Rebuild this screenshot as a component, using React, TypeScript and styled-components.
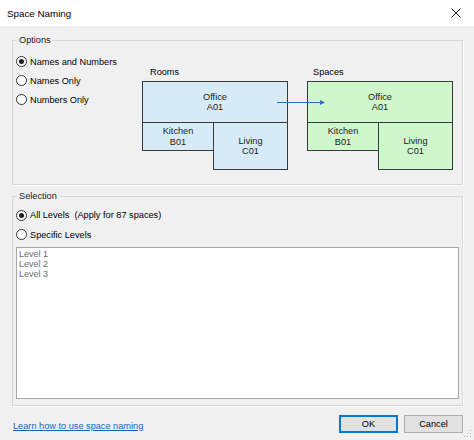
import styled, { createGlobalStyle } from "styled-components";

const GlobalStyle = createGlobalStyle`
  html, body {
    margin: 0;
    padding: 0;
    background: #f0f0f0;
  }
  body {
    font-family: "Liberation Sans", Arial, sans-serif;
    font-size: 9.2px;
    color: #000;
  }
`;

const Window = styled.div`
  position: relative;
  width: 474px;
  height: 440px;
  display: flex;
  flex-direction: column;
  background: #f0f0f0;
  overflow: hidden;
`;

const TitleBar = styled.div`
  height: 26px;
  flex-shrink: 0;
  background: #fff;
  display: flex;
  align-items: center;
  justify-content: space-between;
  padding: 0 13px 0 7px;
`;

const Title = styled.span`
  font-size: 9.8px;
  color: #000;
`;

const Content = styled.div`
  display: flex;
  flex-direction: column;
  padding: 9px 11px 0 12px;
`;

const Group = styled.fieldset<{ $gap?: number }>`
  margin: ${(p) => p.$gap ?? 0}px 0 0 0;
  padding: 0;
  min-width: 0;
  border: 1px solid #d9d9d9;
  box-shadow: 1px 1px 0 #fbfbfb;
`;

const Caption = styled.legend`
  margin-left: 4px;
  padding: 0 2px;
  line-height: 11px;
  font-size: 9.2px;
  color: #1a1a1a;
`;

const OptionsBody = styled.div`
  height: 138px;
  display: flex;
`;

const RadioList = styled.div`
  width: 129px;
  padding-top: 6px;
  display: flex;
  flex-direction: column;
`;

const RadioRow = styled.label<{ $h?: number }>`
  height: ${(p) => p.$h ?? 19}px;
  display: flex;
  align-items: center;
  gap: 3px;
  padding-left: 3px;
  white-space: nowrap;
`;

const RadioCircle = styled.span<{ $checked?: boolean }>`
  box-sizing: border-box;
  width: 11px;
  height: 11px;
  border-radius: 50%;
  border: 1px solid #333;
  background: #fff;
  display: flex;
  align-items: center;
  justify-content: center;
  &::after {
    content: "";
    width: 5px;
    height: 5px;
    border-radius: 50%;
    background: ${(p) => (p.$checked ? "#1e1e1e" : "transparent")};
  }
`;

const DiagramRow = styled.div`
  position: relative;
  display: flex;
  gap: 19px;
  padding-top: 21px;
  align-items: flex-start;
`;

const Diagram = styled.div`
  width: 146px;
  display: flex;
  flex-direction: column;
`;

const DiagramLabel = styled.div<{ $indent: number }>`
  line-height: 11px;
  height: 14px;
  padding-left: ${(p) => p.$indent}px;
`;

const RoomRow = styled.div`
  display: flex;
  align-items: flex-start;
  margin-top: -1px;
`;

const Room = styled.div<{ $w: number; $h: number; $fill: string; $overlap?: boolean }>`
  box-sizing: border-box;
  width: ${(p) => p.$w}px;
  height: ${(p) => p.$h}px;
  margin-left: ${(p) => (p.$overlap ? -1 : 0)}px;
  border: 1px solid #3a3a3a;
  background: ${(p) => p.$fill};
  display: flex;
  flex-direction: column;
  align-items: center;
  justify-content: center;
  line-height: 10.5px;
  color: #1c1c1c;
  text-align: center;
`;

const Arrow = styled.svg`
  position: absolute;
  left: 135px;
  top: 53px;
`;

const SelectionBody = styled.div`
  display: flex;
  flex-direction: column;
  padding: 3px 3px 6px 0;
`;

const LevelList = styled.div`
  box-sizing: border-box;
  height: 152px;
  margin: 3px 0 0 3px;
  border: 1px solid #a8a8a8;
  background: #fff;
  padding: 1px 2px;
  display: flex;
  flex-direction: column;
`;

const LevelItem = styled.div`
  line-height: 10px;
  font-size: 9px;
  color: #6d6d6d;
`;

const Footer = styled.div`
  display: flex;
  align-items: flex-start;
  padding: 9px 11px 0 13px;
`;

const HelpLink = styled.a`
  margin-top: 6px;
  color: #1a62c0;
  text-decoration: underline;
  cursor: pointer;
`;

const ButtonGroup = styled.div`
  margin-left: auto;
  display: flex;
  gap: 6px;
`;

const Button = styled.button<{ $default?: boolean }>`
  box-sizing: border-box;
  width: 59px;
  height: 18px;
  padding: 0;
  font-family: inherit;
  font-size: 9.2px;
  color: #000;
  background: #e1e1e1;
  border: 1px solid ${(p) => (p.$default ? "#0078d7" : "#adadad")};
  box-shadow: ${(p) => (p.$default ? "inset 0 0 0 1px #0078d7" : "none")};
`;

const Grip = styled.svg`
  position: absolute;
  right: 2px;
  bottom: 2px;
`;

const blue = "#d6ebf5";
const green = "#cef7cc";

const RoomLayout = ({ fill, label, indent }: { fill: string; label: string; indent: number }) => (
  <Diagram>
    <DiagramLabel $indent={indent}>{label}</DiagramLabel>
    <Room $w={146} $h={42} $fill={fill}>
      <span>Office</span>
      <span>A01</span>
    </Room>
    <RoomRow>
      <Room $w={72} $h={29} $fill={fill}>
        <span>Kitchen</span>
        <span>B01</span>
      </Room>
      <Room $w={75} $h={48} $fill={fill} $overlap>
        <span>Living</span>
        <span>C01</span>
      </Room>
    </RoomRow>
  </Diagram>
);

export default function App() {
  return (
    <>
      <GlobalStyle />
      <Window>
        <TitleBar>
          <Title>Space Naming</Title>
          <svg width="10" height="10" viewBox="0 0 10 10">
            <path d="M0.5 0.5 L9.5 9.5 M9.5 0.5 L0.5 9.5" stroke="#222" strokeWidth="1" />
          </svg>
        </TitleBar>
        <Content>
          <Group>
            <Caption>Options</Caption>
            <OptionsBody>
              <RadioList>
                <RadioRow>
                  <RadioCircle $checked />
                  Names and Numbers
                </RadioRow>
                <RadioRow>
                  <RadioCircle />
                  Names Only
                </RadioRow>
                <RadioRow>
                  <RadioCircle />
                  Numbers Only
                </RadioRow>
              </RadioList>
              <DiagramRow>
                <RoomLayout fill={blue} label="Rooms" indent={8} />
                <RoomLayout fill={green} label="Spaces" indent={6} />
                <Arrow width="50" height="7" viewBox="0 0 50 7">
                  <line x1="0" y1="3.5" x2="45" y2="3.5" stroke="#2f6fc4" strokeWidth="1" />
                  <path d="M43 1 L48 3.5 L43 6 Z" fill="#2f6fc4" />
                </Arrow>
              </DiagramRow>
            </OptionsBody>
          </Group>
          <Group $gap={6}>
            <Caption>Selection</Caption>
            <SelectionBody>
              <RadioRow $h={20}>
                <RadioCircle $checked />
                All Levels&nbsp;&nbsp;(Apply for 87 spaces)
              </RadioRow>
              <RadioRow>
                <RadioCircle />
                Specific Levels
              </RadioRow>
              <LevelList>
                <LevelItem>Level 1</LevelItem>
                <LevelItem>Level 2</LevelItem>
                <LevelItem>Level 3</LevelItem>
              </LevelList>
            </SelectionBody>
          </Group>
        </Content>
        <Footer>
          <HelpLink>Learn how to use space naming</HelpLink>
          <ButtonGroup>
            <Button $default>OK</Button>
            <Button>Cancel</Button>
          </ButtonGroup>
        </Footer>
        <Grip width="8" height="8" viewBox="0 0 8 8">
          <rect x="6" y="0" width="1" height="1" fill="#b5b5b5" />
          <rect x="3" y="3" width="1" height="1" fill="#b5b5b5" />
          <rect x="6" y="3" width="1" height="1" fill="#b5b5b5" />
          <rect x="0" y="6" width="1" height="1" fill="#b5b5b5" />
          <rect x="3" y="6" width="1" height="1" fill="#b5b5b5" />
          <rect x="6" y="6" width="1" height="1" fill="#b5b5b5" />
        </Grip>
      </Window>
    </>
  );
}
